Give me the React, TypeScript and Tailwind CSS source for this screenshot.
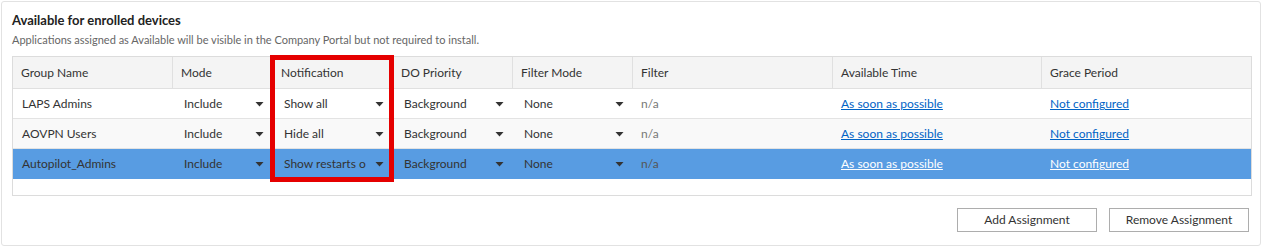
import React from "react";

type Row = {
  group: string;
  mode: string;
  notification: string;
  priority: string;
  filterMode: string;
  filter: string;
  available: string;
  grace: string;
  selected?: boolean;
};

const ROWS: Row[] = [
  { group: "LAPS Admins", mode: "Include", notification: "Show all", priority: "Background", filterMode: "None", filter: "n/a", available: "As soon as possible", grace: "Not configured" },
  { group: "AOVPN Users", mode: "Include", notification: "Hide all", priority: "Background", filterMode: "None", filter: "n/a", available: "As soon as possible", grace: "Not configured" },
  { group: "Autopilot_Admins", mode: "Include", notification: "Show restarts o", priority: "Background", filterMode: "None", filter: "n/a", available: "As soon as possible", grace: "Not configured", selected: true },
];

const COLS = [
  { label: "Group Name", w: "w-[160px]" },
  { label: "Mode", w: "w-[100px]" },
  { label: "Notification", w: "w-[120px]" },
  { label: "DO Priority", w: "w-[120px]" },
  { label: "Filter Mode", w: "w-[120px]" },
  { label: "Filter", w: "w-[200px]" },
  { label: "Available Time", w: "w-[209px]" },
  { label: "Grace Period", w: "w-[209px]" },
];

function Caret() {
  return (
    <svg width="9" height="5" viewBox="0 0 9 5" className="shrink-0">
      <path d="M0.5 0h8L4.5 4.5z" fill="#333" />
    </svg>
  );
}

function Select({ value, w }: { value: string; w: string }) {
  return (
    <div className={`${w} shrink-0 flex items-center pl-[11px] pr-[9px]`}>
      <span className="flex-1 truncate">{value}</span>
      <Caret />
    </div>
  );
}

export default function App() {
  return (
    <div className="w-[1262px] h-[247px] bg-white pt-px pl-px" style={{ fontFamily: "Lato, 'Noto Sans', sans-serif" }}>
      <div className="relative w-[1260px] h-[245px] border border-[#e2e2e2] rounded-[3px] px-[10px] pt-[9px] text-[12px] text-[#333]">
        <h1 className="text-[13px] leading-[18px] font-bold text-[#222]">Available for enrolled devices</h1>
        <p className="mt-[3px] text-[11px] leading-[16px] text-[#666]">
          Applications assigned as Available will be visible in the Company Portal but not required to install.
        </p>

        <div className="mt-[8px] w-[1240px] h-[140px] border border-[#dcdcdc]">
          <div className="flex h-[32px] bg-[#f4f4f4] border-b border-[#e0e0e0]">
            {COLS.map((c, i) => (
              <div
                key={c.label}
                className={`${c.w} shrink-0 flex items-center pl-[8px] ${i < COLS.length - 1 ? "border-r border-[#e0e0e0]" : ""}`}
              >
                {c.label}
              </div>
            ))}
          </div>
          {ROWS.map((r, i) => (
            <div
              key={r.group}
              className={`flex h-[30px] pt-px border-b ${r.selected ? "bg-[#589ce2] border-[#589ce2]" : i % 2 === 1 ? "bg-[#f9f9f9] border-[#e3e3e3]" : "bg-white border-[#e3e3e3]"}`}
            >
              <div className="w-[160px] shrink-0 flex items-center pl-[9px]">{r.group}</div>
              <Select value={r.mode} w="w-[100px]" />
              <Select value={r.notification} w="w-[120px]" />
              <Select value={r.priority} w="w-[120px]" />
              <Select value={r.filterMode} w="w-[120px]" />
              <div className={`w-[200px] shrink-0 flex items-center pl-[8px] ${r.selected ? "text-[#555]" : "text-[#777]"}`}>{r.filter}</div>
              <div className="w-[209px] shrink-0 flex items-center pl-[8px]">
                <a className={`underline ${r.selected ? "text-white" : "text-[#0063c6]"}`}>{r.available}</a>
              </div>
              <div className="w-[209px] shrink-0 flex items-center pl-[8px]">
                <a className={`underline ${r.selected ? "text-white" : "text-[#0063c6]"}`}>{r.grace}</a>
              </div>
            </div>
          ))}
        </div>

        <div className="mt-[12px] flex justify-end gap-[12px] pr-px">
          <button className="w-[140px] h-[24px] border border-[#adadad] bg-white text-[12px] text-[#333]">Add Assignment</button>
          <button className="w-[140px] h-[24px] border border-[#adadad] bg-white text-[12px] text-[#333]">Remove Assignment</button>
        </div>

        <div className="absolute left-[268px] top-[53px] w-[124px] h-[127px] border-[5px] border-[#e50000]" />
      </div>
    </div>
  );
}
